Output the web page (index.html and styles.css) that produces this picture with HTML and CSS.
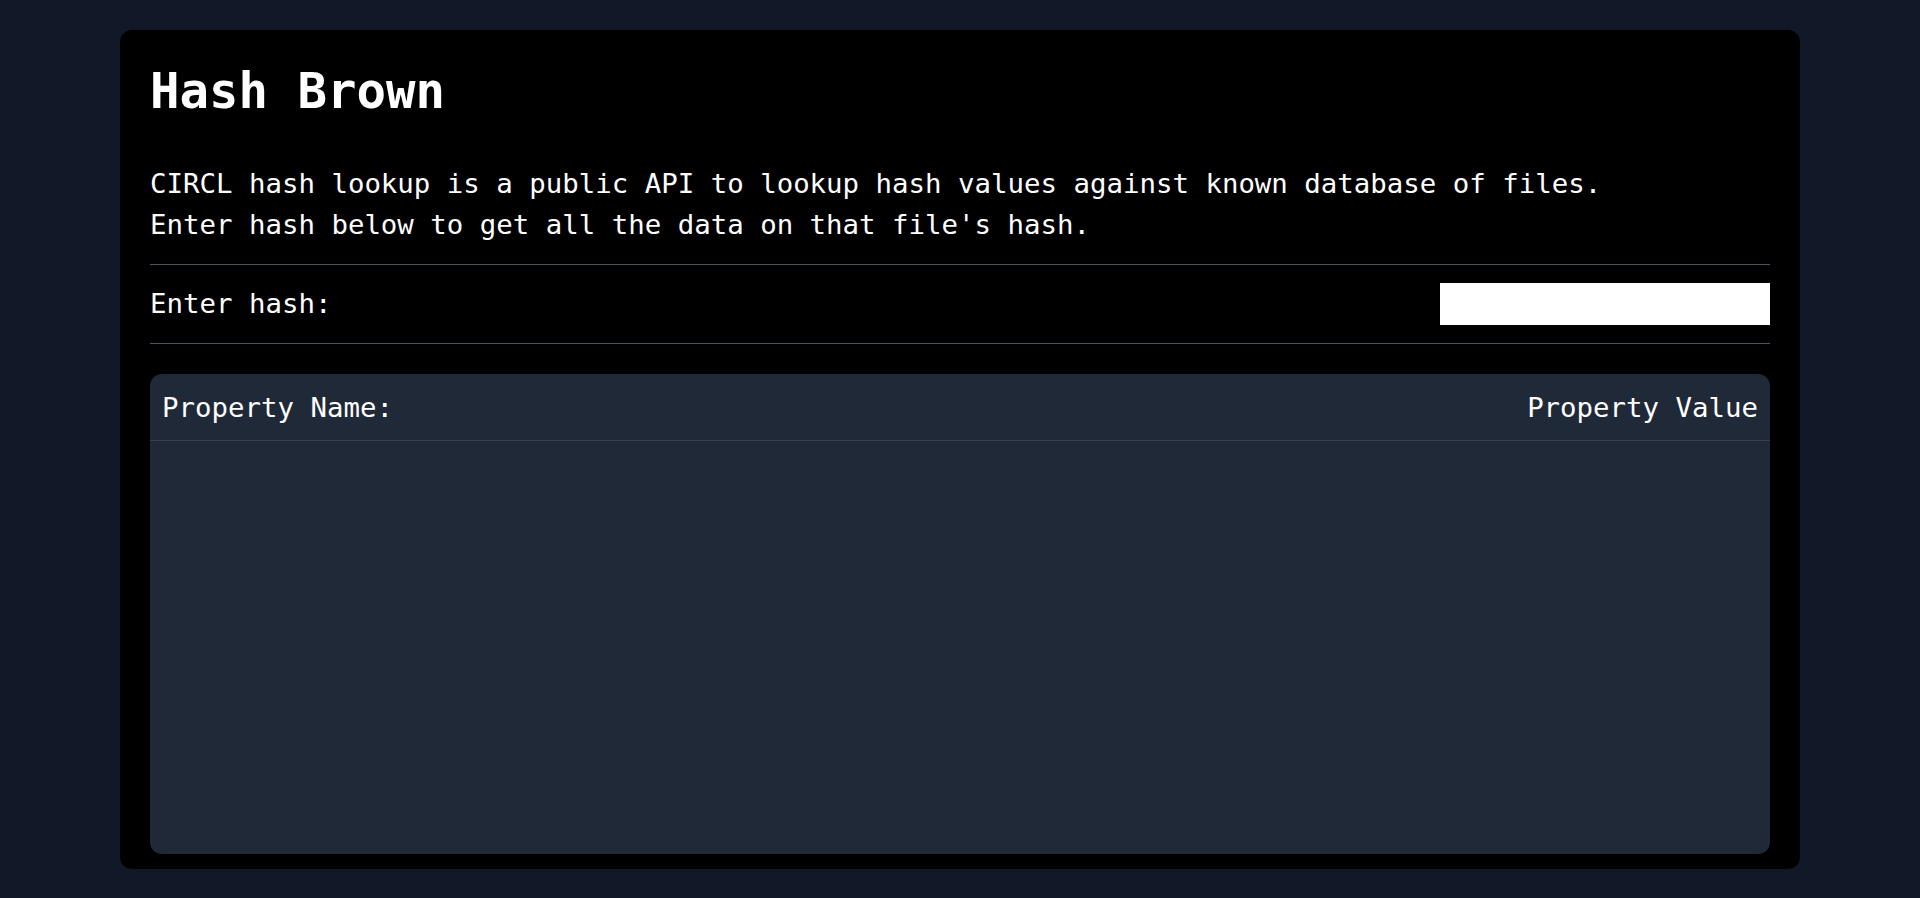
FILE: index.html
```html
<!DOCTYPE html>
<html lang="en">
<head>
<meta charset="utf-8">
<title>Hash Brown</title>
<link rel="stylesheet" href="styles.css">
</head>
<body>
<main class="card">
  <h1 class="title">Hash Brown</h1>
  <p class="intro">CIRCL hash lookup is a public API to lookup hash values against known database of files.<br>Enter hash below to get all the data on that file's hash.</p>
  <div class="hash-row">
    <label class="hash-label" for="hash">Enter hash:</label>
    <input class="hash-input" id="hash" type="text">
  </div>
  <section class="results">
    <div class="results-head">
      <span>Property Name:</span>
      <span>Property Value</span>
    </div>
  </section>
</main>
</body>
</html>
```

FILE: styles.css
```css
html, body {
  margin: 0;
  padding: 0;
}
body {
  background: #111827;
  min-height: 898px;
  font-family: "DejaVu Sans Mono", "Liberation Mono", monospace;
  color: #ffffff;
  padding-top: 30px;
  box-sizing: border-box;
}
.card {
  width: 1680px;
  margin: 0 auto;
  background: #000000;
  border-radius: 12px;
  padding: 30px 30px 15px;
  box-sizing: border-box;
}
.title {
  margin: 0;
  padding-top: 2px;
  font-size: 49px;
  font-weight: bold;
  line-height: 60px;
}
.intro {
  margin: 41px 0 0;
  font-size: 27.4px;
  line-height: 41.25px;
}
.hash-row {
  margin-top: 18px;
  border-top: 1px solid #4b5563;
  border-bottom: 1px solid #4b5563;
  padding: 18px 0;
  display: flex;
  align-items: center;
  justify-content: space-between;
}
.hash-label {
  font-size: 27.4px;
  line-height: 41px;
}
.hash-input {
  width: 330px;
  height: 42px;
  border: none;
  margin: 0;
  padding: 0 8px;
  box-sizing: border-box;
  background: #ffffff;
  font-family: inherit;
  font-size: 20px;
}
.results {
  margin-top: 30px;
  height: 480px;
  background: #1f2937;
  border-radius: 12px;
}
.results-head {
  display: flex;
  justify-content: space-between;
  padding: 13px 12px 12px 12px;
  border-bottom: 1px solid #374151;
  font-size: 27.4px;
  line-height: 41px;
}
```
